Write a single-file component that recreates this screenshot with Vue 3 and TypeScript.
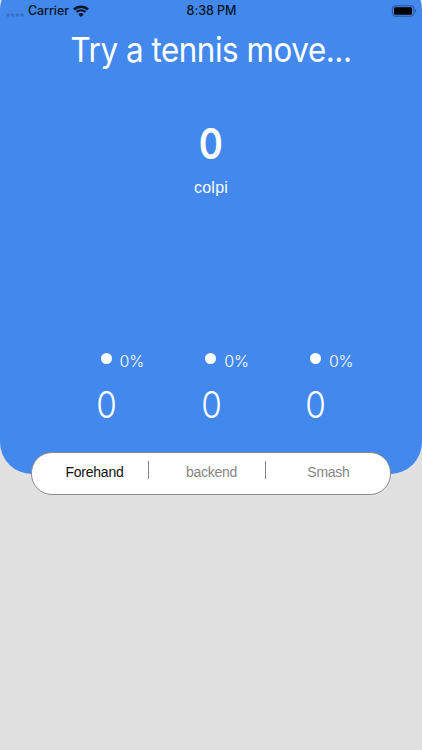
<script setup lang="ts">
import { ref, computed } from 'vue'

interface Move {
  label: string
  count: number
}

const title = ref('Try a tennis move...')
const selected = ref(0)
const moves = ref<Move[]>([
  { label: 'Forehand', count: 0 },
  { label: 'backend', count: 0 },
  { label: 'Smash', count: 0 }
])

const total = computed(() => moves.value.reduce((sum, m) => sum + m.count, 0))

function percent(move: Move): number {
  return total.value ? Math.round((move.count / total.value) * 100) : 0
}
</script>

<template>
  <div class="screen">
    <div class="panel">
      <!-- status bar -->
      <header class="status-bar">
        <div class="carrier">
          <svg class="signal" width="18" height="4" viewBox="0 0 18 4">
            <circle v-for="n in 4" :key="n" :cx="n * 4.7 - 2.7" cy="2" r="1.8" fill="#376fc2" />
          </svg>
          <span class="carrier-name">Carrier</span>
          <svg class="wifi" width="16" height="12" viewBox="0 0 16 12">
            <path d="M1 4.5 A10 10 0 0 1 15 4.5" fill="none" stroke="#0a1526" stroke-width="2.5" />
            <path d="M3.5 7.1 A6.4 6.4 0 0 1 12.5 7.1" fill="none" stroke="#0a1526" stroke-width="2.1" />
            <path d="M8 12 L5.4 9.4 A3.6 3.6 0 0 1 10.6 9.4 Z" fill="#0a1526" />
          </svg>
        </div>
        <span class="clock">8:38 PM</span>
        <svg class="battery" width="26" height="12" viewBox="0 0 26 12">
          <rect x="1.4" y="0.8" width="21.4" height="10.4" rx="2.7" fill="none" stroke="#2b528e" />
          <rect x="3" y="2.2" width="18" height="7.6" rx="1.4" fill="#000" />
          <path d="M24 4.2 Q25.2 4.8 25.2 6 T24 7.8 Z" fill="#2b528e" />
        </svg>
      </header>

      <h1 class="title">{{ title }}</h1>

      <div class="total">
        <span class="total-value">{{ total }}</span>
        <span class="total-label">colpi</span>
      </div>

      <div class="stats">
        <div v-for="move in moves" :key="move.label" class="stat">
          <div class="share">
            <span class="dot"></span>
            <span class="percent">{{ percent(move) }}%</span>
          </div>
          <span class="count">{{ move.count }}</span>
        </div>
      </div>
    </div>

    <!-- move selector -->
    <nav class="selector">
      <button
        v-for="(move, i) in moves"
        :key="move.label"
        :class="['option', { active: selected === i }]"
        @click="selected = i"
      >
        {{ move.label }}
      </button>
    </nav>
  </div>
</template>

<style>
body {
  margin: 0;
  background: #e1e1e1;
}
</style>

<style scoped>
.screen {
  height: 750px;
  overflow: hidden;
  background: #e1e1e1;
  font-family: Inter, "Liberation Sans", sans-serif;
  color: #fff;
}

.panel {
  box-sizing: border-box;
  height: 496px;
  margin-top: -22px;
  padding-top: 22px;
  border-radius: 32px;
  background: #4388ed;
  display: flex;
  flex-direction: column;
}

.status-bar {
  height: 20px;
  padding: 0 5px 0 6px;
  display: grid;
  grid-template-columns: 1fr auto 1fr;
  align-items: center;
  color: #0a1526;
  font-size: 12.5px;
  font-weight: 500;
  line-height: 21px;
}

.carrier {
  display: flex;
  align-items: center;
}

.signal {
  margin-top: 8px;
}

.carrier-name {
  margin-left: 4px;
  letter-spacing: -0.1px;
}

.wifi {
  margin-left: 4px;
}

.clock {
  letter-spacing: -0.05px;
}

.battery {
  justify-self: end;
}

.title {
  margin: 8px 0 0;
  height: 44px;
  font-size: 34px;
  font-weight: 400;
  line-height: 44px;
  letter-spacing: -0.5px;
  text-align: center;
  white-space: nowrap;
  transform: scaleX(0.923);
}

.total {
  margin-top: 46px;
  display: flex;
  flex-direction: column;
  align-items: center;
}

.total-value {
  font-size: 42px;
  font-weight: 600;
  line-height: 51px;
  transform: scaleX(0.87);
}

.total-label {
  margin-top: 9px;
  font-family: "Liberation Sans", sans-serif;
  font-size: 16px;
  line-height: 20px;
  letter-spacing: 0.25px;
}

.stats {
  margin: 154px 54px 0;
  display: grid;
  grid-template-columns: repeat(3, 1fr);
}

.stat {
  display: flex;
  flex-direction: column;
  align-items: center;
}

.share {
  height: 18px;
  padding-left: 32px;
  display: flex;
  gap: 8px;
}

.dot {
  width: 11px;
  height: 11px;
  border-radius: 50%;
  background: #fff;
  margin-top: 1px;
}

.percent {
  font-size: 16px;
  font-weight: 300;
  line-height: 18px;
  letter-spacing: -0.2px;
}

.count {
  margin-top: 11px;
  font-size: 37px;
  font-weight: 300;
  line-height: 48px;
  transform: scaleX(0.9);
}

.selector {
  position: relative;
  box-sizing: border-box;
  height: 43px;
  margin: -22px 31px 0;
  padding-right: 8px;
  border: 1px solid #8a8a8a;
  border-radius: 21px;
  background: #fff;
  display: grid;
  grid-template-columns: 116px 117px 1fr;
}

.option {
  height: 18px;
  margin-top: 8px;
  padding: 0 0 0 9px;
  border: none;
  background: none;
  color: #858585;
  font-family: "Liberation Sans", sans-serif;
  font-size: 14px;
  line-height: 23px;
  letter-spacing: -0.25px;
  cursor: pointer;
}

.option + .option {
  border-left: 1px solid #858585;
}

.option.active {
  color: #111;
}
</style>
